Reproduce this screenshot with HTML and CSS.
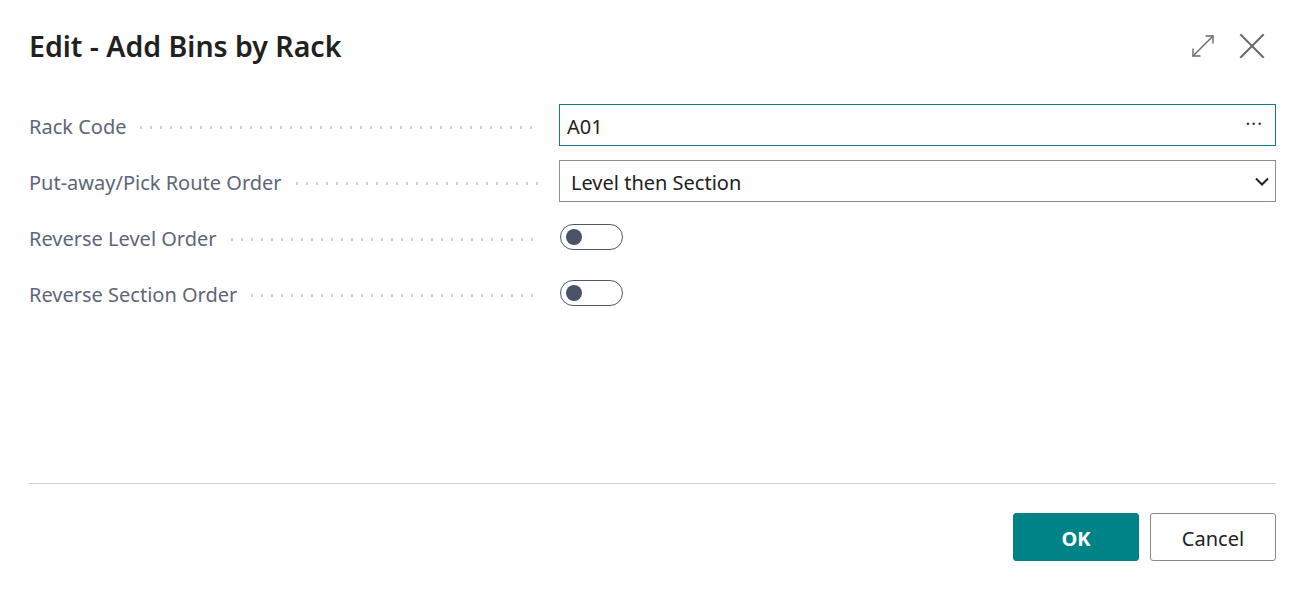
FILE: index.html
```html
<!DOCTYPE html>
<html lang="en">
<head>
<meta charset="utf-8">
<title>Edit - Add Bins by Rack</title>
<link rel="stylesheet" href="styles.css">
</head>
<body>
<div class="dialog">
  <header class="head">
    <h1 class="title">Edit - Add Bins by Rack</h1>
    <div class="head-actions">
      <button class="icon-btn" aria-label="Expand">
        <svg width="24" height="24" viewBox="0 0 24 24" fill="none" stroke="#6b6b6b" stroke-width="1.4" stroke-linecap="round" stroke-linejoin="round"><path d="M2 22 L22 2"/><path d="M2 15 V22 H9"/><path d="M15 2 H22 V9"/></svg>
      </button>
      <button class="icon-btn" aria-label="Close">
        <svg width="26" height="26" viewBox="0 0 26 26" fill="none" stroke="#6b6b6b" stroke-width="2" stroke-linecap="square"><path d="M2 2 L24 24"/><path d="M24 2 L2 24"/></svg>
      </button>
    </div>
  </header>

  <div class="form">
    <div class="row">
      <div class="label"><span class="text">Rack Code</span><span class="leader"></span></div>
      <div class="field input focused"><span class="value">A01</span><span class="more">···</span></div>
    </div>
    <div class="row">
      <div class="label"><span class="text">Put-away/Pick Route Order</span><span class="leader"></span></div>
      <div class="field select"><span class="value sel">Level then Section</span>
        <svg class="chev" width="14" height="9" viewBox="0 0 14 9" fill="none" stroke="#222" stroke-width="2"><path d="M1 1.5 L7 7.5 L13 1.5"/></svg>
      </div>
    </div>
    <div class="row">
      <div class="label"><span class="text">Reverse Level Order</span><span class="leader"></span></div>
      <div class="toggle-cell"><span class="toggle"><span class="knob"></span></span></div>
    </div>
    <div class="row">
      <div class="label"><span class="text">Reverse Section Order</span><span class="leader"></span></div>
      <div class="toggle-cell"><span class="toggle"><span class="knob"></span></span></div>
    </div>
  </div>

  <footer class="foot">
    <button class="btn primary">OK</button>
    <button class="btn secondary">Cancel</button>
  </footer>
</div>
</body>
</html>
```

FILE: styles.css
```css
* { box-sizing: border-box; }
html, body { margin: 0; padding: 0; background: #fff; }
body {
  font-family: "Noto Sans", "Open Sans", "Liberation Sans", sans-serif;
  color: #212121;
  width: 1306px;
  height: 593px;
  overflow: hidden;
}
.dialog {
  padding: 0 30px 0 29px;
  display: flex;
  flex-direction: column;
  height: 593px;
}
.head {
  display: flex;
  align-items: center;
  justify-content: space-between;
  height: 90px;
  padding-top: 2px;
}
.title {
  margin: 0;
  font-size: 28.5px;
  font-weight: 600;
  color: #212121;
  letter-spacing: 0;
}
.head-actions {
  display: flex;
  align-items: center;
  gap: 23px;
  margin-right: 11px;
}
.icon-btn {
  border: 0;
  background: none;
  padding: 0;
  width: 26px;
  height: 26px;
  display: flex;
  align-items: center;
  justify-content: center;
}
.form {
  display: flex;
  flex-direction: column;
  gap: 14px;
  padding-top: 14px;
}
.row {
  display: grid;
  grid-template-columns: 516px 1fr;
  gap: 14px;
  align-items: center;
  height: 42px;
}
.label {
  display: flex;
  align-items: center;
  color: #5d6677;
  font-size: 20px;
  min-width: 0;
  padding-top: 3px;
}
.label .text { white-space: nowrap; }
.leader {
  flex: 1;
  height: 3px;
  margin-left: 10px;
  margin-top: 1px;
  margin-right: 6px;
  background-image: radial-gradient(circle, #c9cbce 1.1px, transparent 1.3px);
  background-size: 10px 3px;
  background-repeat: repeat-x;
  background-position: left center;
}
.field {
  height: 42px;
  display: flex;
  align-items: center;
  font-size: 20px;
  color: #212121;
}
.value { padding-top: 2px; }
.input {
  border: 1px solid #0e7e83;
  padding: 0 12px 0 7px;
  justify-content: space-between;
}
.more {
  color: #333;
  font-size: 18px;
  letter-spacing: 1px;
  margin-top: -4px;
}
.select {
  border: 1px solid #8a8f96;
  padding: 0 6px 0 11px;
  justify-content: space-between;
}
.toggle-cell {
  display: flex;
  align-items: center;
}
.toggle {
  margin-left: 1px;
  width: 63px;
  height: 26px;
  border: 1.5px solid #4e576b;
  border-radius: 13px;
  display: flex;
  align-items: center;
  padding-left: 5px;
}
.knob {
  width: 16px;
  height: 16px;
  border-radius: 50%;
  background: #4a5469;
}
.foot {
  margin-top: auto;
  border-top: 1px solid #d4d4d4;
  height: 110px;
  display: flex;
  justify-content: flex-end;
  align-items: flex-start;
  gap: 11px;
  padding-top: 29px;
}
.btn {
  width: 126px;
  height: 48px;
  font-family: inherit;
  font-size: 20px;
  border-radius: 3px;
  padding: 2px 0 0;
}
.primary {
  background: #008387;
  border: 1px solid #008387;
  color: #fff;
  font-weight: 700;
}
.secondary {
  background: #fff;
  border: 1px solid #8a8a8a;
  color: #212121;
}
```
